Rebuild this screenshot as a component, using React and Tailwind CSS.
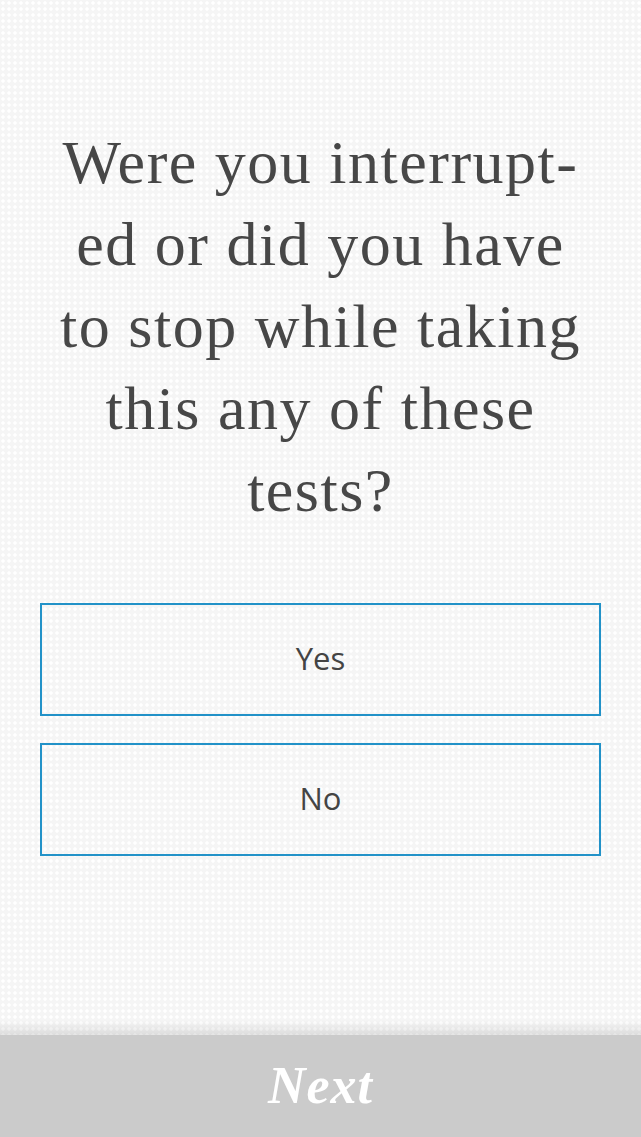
export default function App() {
  const options = ['Yes', 'No']

  return (
    <div className="flex flex-col h-[1137px] bg-[#f5f5f5] bg-[radial-gradient(circle,#ffffff_1.4px,transparent_2px)] bg-[length:6px_6px] overflow-hidden">
      {/* Question */}
      <h1 className="pt-[121px] text-center text-[62px] leading-[82px] tracking-[1.5px] text-[#474747] font-normal font-['Liberation_Serif',Georgia,serif]">
        Were you interrupt-<br />
        ed or did you have<br />
        to stop while taking<br />
        this any of these<br />
        tests?
      </h1>

      {/* Options */}
      <div className="mt-[72px] mx-[40px] flex flex-col gap-[27px]">
        {options.map(label => (
          <button
            key={label}
            className="h-[113px] w-full border-2 border-[#2292c8] flex items-center justify-center text-[31px] text-[#444444] font-['Open_Sans','DejaVu_Sans',sans-serif]"
          >
            <span className="-mt-[2px]">{label}</span>
          </button>
        ))}
      </div>

      <div className="flex-1" />

      {/* Bottom bar */}
      <div className="h-[15px] bg-gradient-to-b from-transparent to-black/10" />
      <div className="h-[102px] bg-[#cbcbcb] flex items-center justify-center">
        <span className="text-[52px] tracking-[1px] font-bold italic text-white font-['Liberation_Serif',Georgia,serif]">
          Next
        </span>
      </div>
    </div>
  )
}
